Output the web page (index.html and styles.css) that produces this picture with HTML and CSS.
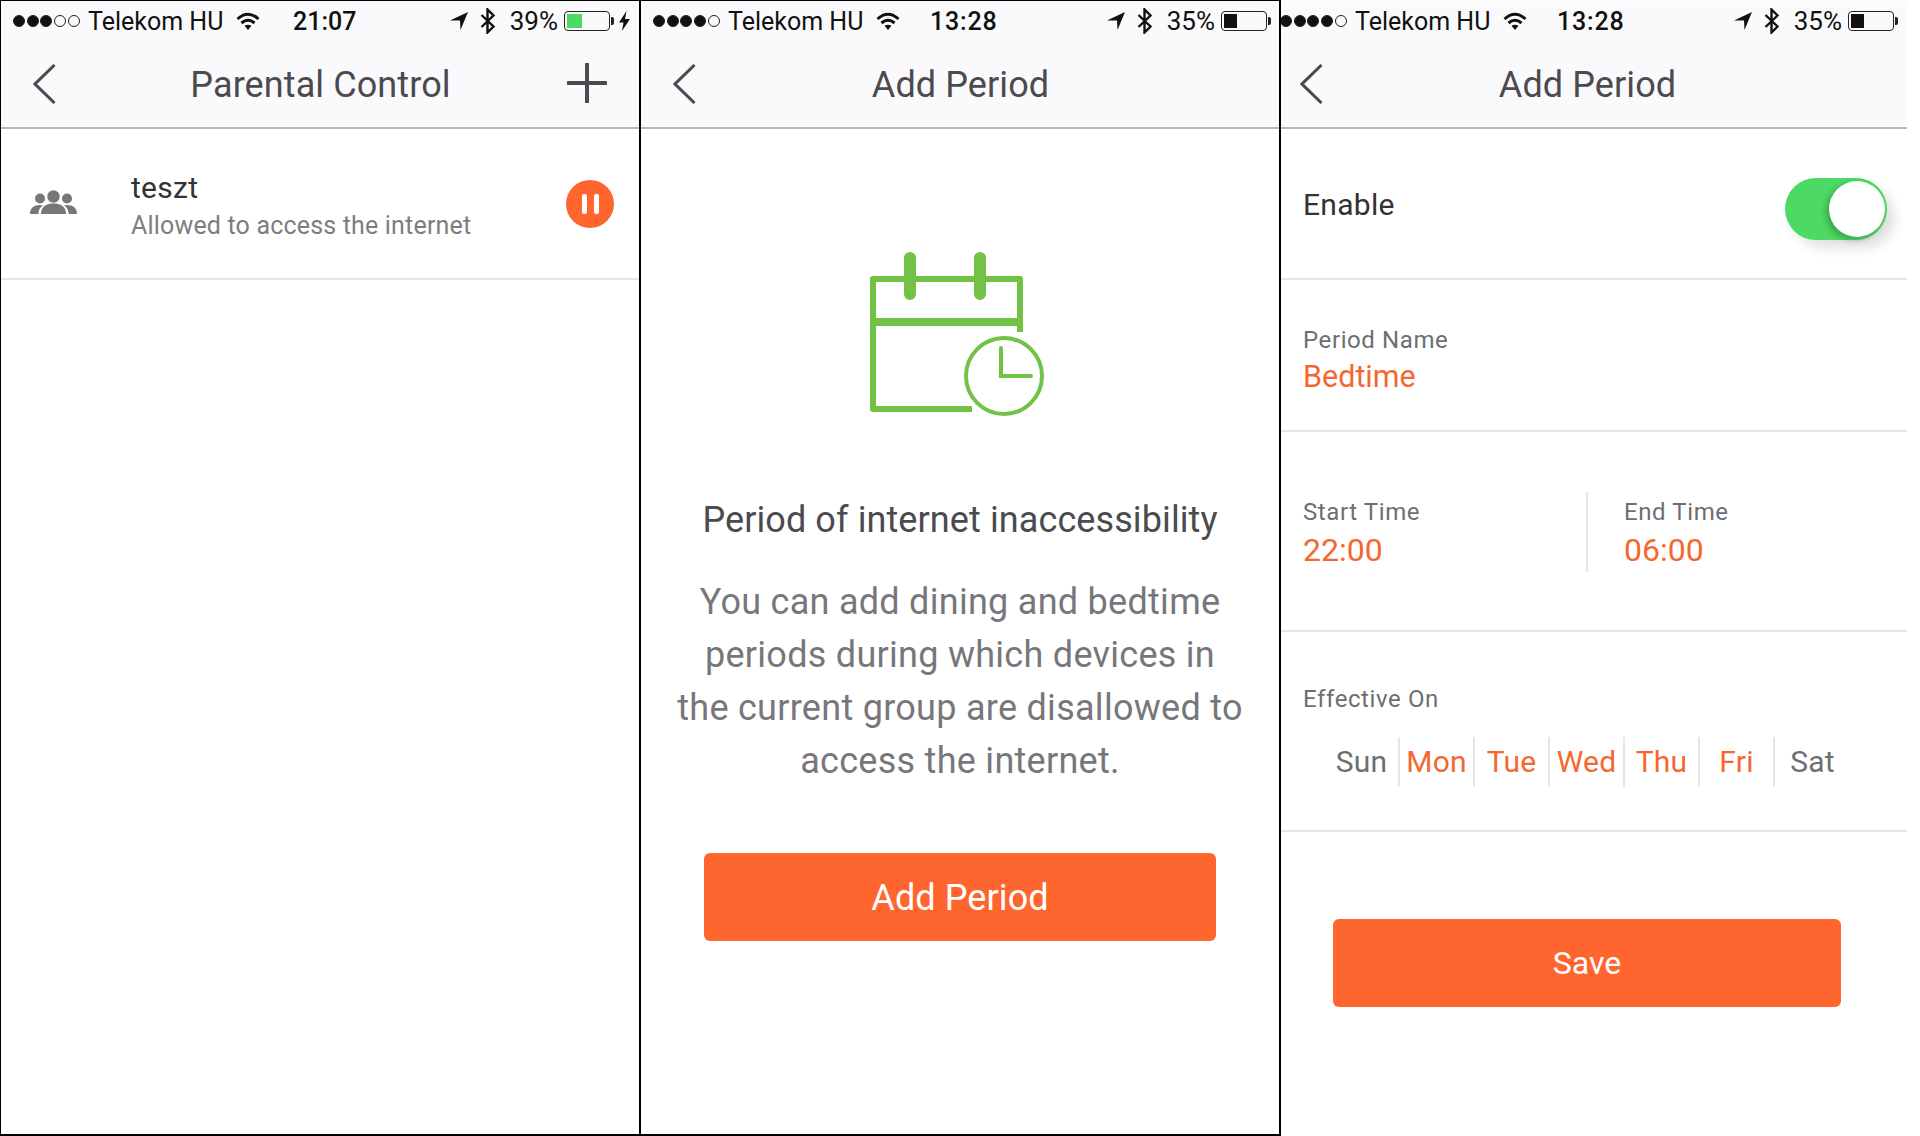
FILE: index.html
```html
<!DOCTYPE html>
<html lang="en">

<head>
    <meta charset="UTF-8">
    <title>Parental Control</title>
    <link rel="stylesheet" href="styles.css">
</head>

<body>
    <svg class="sprites" width="0" height="0">
        <symbol id="wifi" viewBox="0 0 24 18">
            <g fill="none" stroke="#111" stroke-width="3">
                <path d="M1.500 7 Q12 -2.500 22.500 7" />
                <path d="M5.500 11 Q12 5.500 18.500 11" />
            </g>
            <path d="M8.500 13.800 Q12 11.500 15.500 13.800 L12 18Z" fill="#111" />
        </symbol>
        <symbol id="arrow" viewBox="0 0 18 18">
            <path d="M0 8.500 L18 0 L10.500 18 L10 8.500Z" fill="#111" />
        </symbol>
        <symbol id="bluetooth" viewBox="0 0 16 26">
            <path d="M1.500 7 L13.500 18.500 L7.500 24.500 V1.500 L13.500 7.500 L1.500 19" fill="none" stroke="#111" stroke-width="2.400" />
        </symbol>
        <symbol id="chevron" viewBox="0 0 23 40">
            <path d="M21.500 1 L2 20 L21.500 39" fill="none" stroke="#4a4a4f" stroke-width="3" />
        </symbol>
    </svg>

    <div class="shots">
        <section class="panel first">
            <div class="screen">
                <div class="status">
                    <div class="dots"><i class="on"></i><i class="on"></i><i class="on"></i><i></i><i></i></div>
                    <span class="carrier">Telekom HU</span>
                    <svg class="ico-wifi"><use href="#wifi" /></svg>
                    <span class="clock">21:07</span>
                    <div class="status-right charging">
                        <svg class="ico-arrow"><use href="#arrow" /></svg>
                        <svg class="ico-bt"><use href="#bluetooth" /></svg>
                        <span class="pct">39%</span>
                        <div class="battery"><div class="level green" style="width: 37%"></div></div>
                        <svg class="ico-bolt" viewBox="0 0 11 20"><path d="M7.500 0 L0 11.500 H4.500 L3 20 L11 8 H6Z" fill="#111" /></svg>
                    </div>
                </div>
                <header class="nav">
                    <svg class="back"><use href="#chevron" /></svg>
                    <h1>Parental Control</h1>
                    <svg class="plus" viewBox="0 0 40 40"><path d="M20 1 V39 M1 20 H39" stroke="#4a4a4f" stroke-width="4" stroke-linecap="round" /></svg>
                </header>
                <div class="row group-row">
                    <svg class="group-ico" viewBox="0 0 47 24">
                        <g fill="#777">
                            <circle cx="23.500" cy="6.500" r="6.200" />
                            <circle cx="10" cy="8.500" r="5" />
                            <circle cx="37" cy="8.500" r="5" />
                            <path d="M11 24 C11 16 17 13.500 23.500 13.500 C30 13.500 36 16 36 24Z" />
                            <path d="M0 24 C0 18 4 15 10 15 C11 15 12 15.200 13 15.500 C10 17.500 8.500 20 8.300 24Z" />
                            <path d="M47 24 C47 18 43 15 37 15 C36 15 35 15.200 34 15.500 C37 17.500 38.500 20 38.700 24Z" />
                        </g>
                    </svg>
                    <div class="group-text">
                        <div class="group-name">teszt</div>
                        <div class="group-sub">Allowed to access the internet</div>
                    </div>
                    <div class="pause"><i></i><i></i></div>
                </div>
            </div>
        </section>

        <section class="panel middle">
            <div class="screen">
                <div class="status">
                    <div class="dots"><i class="on"></i><i class="on"></i><i class="on"></i><i class="on"></i><i></i></div>
                    <span class="carrier">Telekom HU</span>
                    <svg class="ico-wifi"><use href="#wifi" /></svg>
                    <span class="clock tight">13:28</span>
                    <div class="status-right">
                        <svg class="ico-arrow"><use href="#arrow" /></svg>
                        <svg class="ico-bt"><use href="#bluetooth" /></svg>
                        <span class="pct">35%</span>
                        <div class="battery"><div class="level" style="width: 33%"></div></div>
                    </div>
                </div>
                <header class="nav">
                    <svg class="back"><use href="#chevron" /></svg>
                    <h1>Add Period</h1>
                </header>
                <div class="intro">
                    <svg class="calendar" viewBox="0 0 170 170">
                        <g fill="none" stroke="#72c245">
                            <path d="M102 139 H3 V9 H150 V62" stroke-width="6" stroke-linejoin="round" />
                            <path d="M3 52 H150" stroke-width="8" />
                            <circle cx="134" cy="106" r="38" stroke-width="4" />
                            <path d="M131 78 V106 H161" stroke-width="4" stroke-linecap="round" />
                            <path d="M40 -12 V24 M110 -12 V24" stroke-width="12" stroke-linecap="round" />
                        </g>
                    </svg>
                    <h2>Period of internet inaccessibility</h2>
                    <p>You can add dining and bedtime<br>periods during which devices in<br>the current group are disallowed to<br>access the internet.</p>
                    <button class="btn add-btn">Add Period</button>
                </div>
            </div>
        </section>

        <section class="panel last">
            <div class="screen">
                <div class="status">
                    <div class="dots"><i class="on"></i><i class="on"></i><i class="on"></i><i class="on"></i><i></i></div>
                    <span class="carrier">Telekom HU</span>
                    <svg class="ico-wifi"><use href="#wifi" /></svg>
                    <span class="clock tight">13:28</span>
                    <div class="status-right">
                        <svg class="ico-arrow"><use href="#arrow" /></svg>
                        <svg class="ico-bt"><use href="#bluetooth" /></svg>
                        <span class="pct">35%</span>
                        <div class="battery"><div class="level" style="width: 33%"></div></div>
                    </div>
                </div>
                <header class="nav">
                    <svg class="back"><use href="#chevron" /></svg>
                    <h1>Add Period</h1>
                </header>
                <div class="row enable-row">
                    <span class="enable">Enable</span>
                    <div class="toggle"><div class="knob"></div></div>
                </div>
                <div class="row name-row">
                    <div class="label">Period Name</div>
                    <div class="value">Bedtime</div>
                </div>
                <div class="row time-row">
                    <div class="time-col">
                        <div class="label">Start Time</div>
                        <div class="value">22:00</div>
                    </div>
                    <div class="time-col end">
                        <div class="label">End Time</div>
                        <div class="value">06:00</div>
                    </div>
                </div>
                <div class="row days-row">
                    <div class="label">Effective On</div>
                    <div class="days">
                        <span>Sun</span>
                        <span class="sel">Mon</span>
                        <span class="sel">Tue</span>
                        <span class="sel">Wed</span>
                        <span class="sel">Thu</span>
                        <span class="sel">Fri</span>
                        <span>Sat</span>
                    </div>
                </div>
                <button class="btn save-btn">Save</button>
            </div>
        </section>
    </div>
</body>

</html>
```

FILE: styles.css
```css
* {
    box-sizing: border-box;
}

body {
    margin: 0;
    background-color: #fff;
    font-family: 'Roboto', 'Liberation Sans', sans-serif;
}

.sprites {
    display: block;
    height: 0;
}

.shots {
    display: flex;
    height: 1136px;
    width: 1907px;
}

.panel {
    height: 100%;
    overflow: hidden;
    border-top: 1px solid #000;
    border-bottom: 2px solid #000;
    border-right: 2px solid #000;
}

.panel.first {
    width: 641px;
    border-left: 1px solid #000;
}

.panel.middle {
    width: 640px;
}

.panel.last {
    width: 626px;
    padding-top: 1px;
    border: none;
}

.screen {
    width: 639px;
}

.panel.last .screen {
    margin-left: -13px;
}

/* status bar */
.status {
    display: flex;
    align-items: center;
    height: 40px;
    padding-left: 12px;
    padding-right: 5px;
    background-color: #fafafc;
    color: #111;
    font-size: 25px;
}

.dots {
    display: flex;
    gap: 1.700px;
    width: 75px;
}

.dots i {
    width: 12px;
    height: 12px;
    border-radius: 50%;
    border: 1px solid #222;
}

.dots i.on {
    background-color: #111;
}

.carrier {
    width: 148px;
}

.ico-wifi {
    width: 24px;
    height: 18px;
}

.clock {
    margin-left: 33px;
    font-weight: 500;
}

.clock.tight {
    margin-left: 30px;
    letter-spacing: 0.8px;
}

.status-right {
    display: flex;
    align-items: center;
    margin-left: auto;
    margin-right: 3px;
}

.status-right.charging {
    margin-right: 0;
}

.ico-arrow {
    width: 18px;
    height: 18px;
}

.ico-bt {
    width: 16px;
    height: 26px;
    margin-left: 12px;
}

.pct {
    margin-left: 14px;
    font-size: 26px;
}

.battery {
    position: relative;
    width: 46px;
    height: 20px;
    margin-left: 6px;
    margin-right: 5px;
    padding: 2px;
    border: 1px solid #222;
    border-radius: 4px;
}

.battery::after {
    content: "";
    position: absolute;
    right: -5px;
    top: 5px;
    width: 3px;
    height: 8px;
    background-color: #222;
    border-radius: 0 2px 2px 0;
}

.level {
    height: 100%;
    background-color: #111;
}

.level.green {
    background-color: #4cd964;
}

.ico-bolt {
    width: 11px;
    height: 20px;
    margin-left: 4px;
    margin-right: 5px;
}

/* nav bar */
.nav {
    display: flex;
    align-items: center;
    justify-content: center;
    position: relative;
    height: 88px;
    padding-top: 2px;
    background-color: #fafafc;
    border-bottom: 2px solid #b9b9bb;
}

.nav h1 {
    margin: 0;
    color: #4a4a4f;
    font-size: 36px;
    font-weight: 400;
    letter-spacing: 0.1px;
}

.back {
    position: absolute;
    left: 32px;
    top: 23px;
    width: 23px;
    height: 40px;
}

.plus {
    position: absolute;
    right: 33px;
    top: 22px;
    width: 40px;
    height: 40px;
}

.row {
    border-bottom: 2px solid #e6e6e8;
}

/* parental control list */
.group-row {
    display: flex;
    align-items: center;
    height: 151px;
    padding-left: 29px;
}

.group-ico {
    width: 47px;
    height: 24px;
    margin-bottom: 3px;
}

.group-text {
    margin-left: 54px;
    flex: 1;
}

.group-name {
    color: #333;
    font-size: 30px;
    letter-spacing: 0.3px;
    line-height: 44px;
}

.group-sub {
    color: #7d7d80;
    font-size: 25px;
    letter-spacing: 0.18px;
    line-height: 32px;
}

.pause {
    display: flex;
    align-items: center;
    justify-content: center;
    gap: 7px;
    width: 48px;
    height: 48px;
    margin-right: 26px;
    border-radius: 50%;
    background-color: #ff652f;
}

.pause i {
    width: 5px;
    height: 20px;
    border-radius: 2px;
    background-color: #fff;
}

/* add period intro */
.intro {
    display: flex;
    flex-direction: column;
    align-items: center;
    width: 638px;
    text-align: center;
}

.calendar {
    width: 170px;
    height: 170px;
    margin-top: 141px;
    margin-left: -10px;
    overflow: visible;
}

.intro h2 {
    margin: 58px 0 0;
    color: #4a4a4f;
    font-size: 36px;
    font-weight: 400;
    letter-spacing: 0.1px;
    line-height: 44px;
}

.intro p {
    margin: 34px 0 0;
    color: #77777b;
    font-size: 36px;
    letter-spacing: 0.28px;
    line-height: 53px;
}

.btn {
    display: block;
    border: none;
    border-radius: 6px;
    background-color: #ff652f;
    color: #fff;
    font-family: inherit;
}

.add-btn {
    width: 512px;
    height: 88px;
    margin-top: 65px;
    padding-top: 3px;
    font-size: 36px;
    letter-spacing: 0.1px;
}

/* add period form */
.enable-row {
    display: flex;
    align-items: center;
    justify-content: space-between;
    height: 151px;
    padding-left: 35px;
    padding-right: 20px;
}

.enable {
    margin-top: 2px;
    color: #333;
    font-size: 30px;
    letter-spacing: 0.3px;
}

.toggle {
    display: flex;
    align-items: center;
    justify-content: flex-end;
    width: 102px;
    height: 62px;
    margin-top: 10px;
    padding-right: 2px;
    border-radius: 31px;
    background-color: #4cd964;
    box-shadow: 8px 8px 12px rgba(0, 0, 0, 0.12);
}

.knob {
    width: 56px;
    height: 56px;
    border-radius: 50%;
    background-color: #fff;
    box-shadow: -3px 3px 6px rgba(0, 0, 0, 0.25);
}

.label {
    color: #6b6f73;
    font-size: 24px;
    letter-spacing: 0.6px;
    line-height: 30px;
}

.value {
    color: #f4682f;
    font-size: 30.500px;
    line-height: 44px;
}

.time-col .value {
    margin-top: 1px;
    font-size: 32px;
}

.name-row {
    height: 152px;
    padding: 45px 0 0 35px;
}

.time-row {
    display: flex;
    height: 200px;
    padding-top: 60px;
}

.time-col {
    width: 320px;
    height: 80px;
    padding: 5px 0 0 35px;
    border-right: 2px solid #e6e6e8;
}

.time-col.end {
    width: auto;
    padding-left: 36px;
    border-right: none;
}

.days-row {
    height: 200px;
    padding: 52px 0 0 35px;
}

.days {
    display: flex;
    margin-top: 23px;
    margin-left: 22px;
}

.days span {
    width: 75px;
    height: 50px;
    border-right: 2px solid #e6e6e8;
    color: #6b6f73;
    font-size: 30px;
    letter-spacing: 0.2px;
    line-height: 50px;
    text-align: center;
}

.days span:last-child {
    border-right: none;
}

.days span.sel {
    color: #f4682f;
}

.save-btn {
    width: 508px;
    height: 88px;
    margin-top: 87px;
    margin-left: 65px;
    font-size: 32px;
}
```
